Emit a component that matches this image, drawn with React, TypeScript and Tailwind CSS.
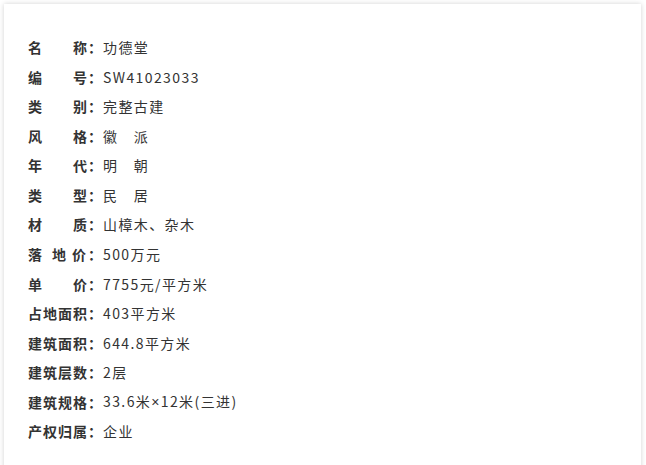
import React from "react";

const rows: [React.ReactNode, React.ReactNode, string][] = [
  ["名　　称：", "功德堂", "a"],
  ["编　　号：", "SW41023033", "b"],
  ["类　　别：", "完整古建", "c"],
  ["风　　格：", "徽　派", "d"],
  ["年　　代：", "明　朝", "e"],
  ["类　　型：", "民　居", "f"],
  ["材　　质：", "山樟木、杂木", "g"],
  [
    <>
      <span className="mr-[9px]">落</span>
      <span className="mr-[5px]">地</span>
      <span className="mr-[1px]">价</span>：
    </>,
    "500万元",
    "h",
  ],
  ["单　　价：", "7755元/平方米", "i"],
  ["占地面积：", "403平方米", "j"],
  ["建筑面积：", "644.8平方米", "k"],
  ["建筑层数：", "2层", "l"],
  [
    "建筑规格：",
    <>
      33.6米<span style={{ fontFamily: '"Liberation Sans", sans-serif' }}>×</span>12米(三进)
    </>,
    "m",
  ],
  ["产权归属：", "企业", "n"],
];

export default function App() {
  return (
    <div className="w-[646px] h-[465px] overflow-hidden bg-white pt-[4px] pl-[4px]">
      <div
        className="w-[637px] h-[480px] bg-white shadow-[0_0_5px_rgba(0,0,0,0.18)] pl-[24px] pt-[29px]"
        style={{ fontFamily: '"Microsoft YaHei", "Noto Sans CJK SC", sans-serif' }}
      >
        {rows.map(([k, v, id]) => (
          <div key={id} className="flex h-[29.54px] items-center text-[14px] text-[#333]">
            <span className="font-bold whitespace-pre w-[75px] shrink-0 tracking-[1px]">{k}</span>
            <span className="whitespace-pre tracking-[1.4px]">{v}</span>
          </div>
        ))}
      </div>
    </div>
  );
}
